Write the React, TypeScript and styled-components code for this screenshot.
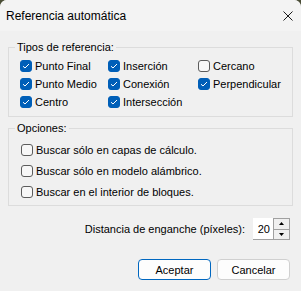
import styled, { createGlobalStyle } from "styled-components";

const GlobalStyle = createGlobalStyle`
  html, body {
    margin: 0;
    background: #4a4d36;
  }
  body {
    font-family: "Liberation Sans", Arial, sans-serif;
    color: #000;
  }
`;

const TYPES = [
  { label: "Punto Final", checked: true },
  { label: "Inserción", checked: true },
  { label: "Cercano", checked: false },
  { label: "Punto Medio", checked: true },
  { label: "Conexión", checked: true },
  { label: "Perpendicular", checked: true },
  { label: "Centro", checked: true },
  { label: "Intersección", checked: true },
];

const OPTIONS = [
  "Buscar sólo en capas de cálculo.",
  "Buscar sólo en modelo alámbrico.",
  "Buscar en el interior de bloques.",
];

const Window = styled.div`
  width: 301px;
  height: 291px;
  background: #f0f0f0;
  border-radius: 7px 7px 0 0;
  overflow: hidden;
  display: flex;
  flex-direction: column;
`;

const TitleBar = styled.div`
  height: 31px;
  background: #f3f3f3;
  display: flex;
  align-items: center;
  justify-content: space-between;
  padding: 0 8px 0 6px;
`;

const Title = styled.span`
  font-size: 12px;
`;

const Body = styled.div`
  display: flex;
  flex-direction: column;
  padding: 8px 8px 0 8px;
`;

const Group = styled.fieldset<{ $top?: number; $bottom: number }>`
  margin: ${(p) => p.$top ?? 0}px 0 0 0;
  padding: 0 0 ${(p) => p.$bottom}px 0;
  border: 1px solid #dcdcdc;
  min-width: 0;
`;

const Legend = styled.legend`
  margin-left: 6px;
  padding: 0 2px;
  font-size: 11px;
  line-height: 16px;
`;

const TypeGrid = styled.div`
  display: grid;
  grid-template-columns: 88px 90px 1fr;
  grid-auto-rows: 18px;
  padding: 2px 0 0 11px;
`;

const OptionList = styled.div`
  display: flex;
  flex-direction: column;
  padding: 3px 0 0 12px;
`;

const CheckRow = styled.label<{ $h: number }>`
  height: ${(p) => p.$h}px;
  display: flex;
  align-items: center;
  gap: 3px;
  font-size: 11px;
  white-space: nowrap;
`;

const Box = styled.span<{ $on: boolean }>`
  width: 12px;
  height: 12px;
  box-sizing: border-box;
  border-radius: 3px;
  display: flex;
  align-items: center;
  justify-content: center;
  background: ${(p) => (p.$on ? "#005fb8" : "#f7f7f7")};
  border: 1px solid ${(p) => (p.$on ? "#005fb8" : "#5c5c5c")};
`;

const SnapRow = styled.div`
  margin: 12px 3px 0 0;
  height: 22px;
  display: flex;
  align-items: center;
  justify-content: flex-end;
  gap: 8px;
  font-size: 11px;
`;

const Spin = styled.div`
  display: flex;
  height: 22px;
`;

const SpinField = styled.div`
  width: 20px;
  background: #fff;
  border-bottom: 1px solid #a0a0a0;
  box-sizing: border-box;
  display: flex;
  align-items: center;
  justify-content: flex-end;
  padding-right: 3px;
  font-size: 11px;
`;

const SpinButtons = styled.div`
  width: 17px;
  display: flex;
  flex-direction: column;
  border: 1px solid #a0a0a0;
  box-sizing: border-box;
  background: #f0f0f0;
`;

const SpinButton = styled.div<{ $down?: boolean }>`
  flex: 1;
  display: flex;
  align-items: center;
  justify-content: center;
  border-top: ${(p) => (p.$down ? "1px solid #a0a0a0" : "none")};
`;

const ButtonRow = styled.div`
  margin: 19px 3px 0 0;
  display: flex;
  justify-content: flex-end;
  gap: 6px;
`;

const Button = styled.button<{ $primary?: boolean }>`
  width: 73px;
  height: 21px;
  box-sizing: border-box;
  border-radius: 4px;
  background: #fdfdfd;
  border: 1px solid ${(p) => (p.$primary ? "#0067c0" : "#d0d0d0")};
  font-family: inherit;
  font-size: 11px;
  color: #000;
  padding: 0;
`;

function Check({ on }: { on: boolean }) {
  return (
    <Box $on={on}>
      {on && (
        <svg width="8" height="6" viewBox="0 0 8 6">
          <path d="M1 3.2 L3 5 L7 1" fill="none" stroke="#fff" strokeWidth="1" />
        </svg>
      )}
    </Box>
  );
}

export default function App() {
  return (
    <>
      <GlobalStyle />
      <Window>
        <TitleBar>
          <Title>Referencia automática</Title>
          <svg width="10" height="10" viewBox="0 0 10 10">
            <path d="M0.5 0.5 L9.5 9.5 M9.5 0.5 L0.5 9.5" stroke="#1a1a1a" strokeWidth="1" />
          </svg>
        </TitleBar>
        <Body>
          <Group $bottom={5}>
            <Legend>Tipos de referencia:</Legend>
            <TypeGrid>
              {TYPES.map((t) => (
                <CheckRow key={t.label} $h={18}>
                  <Check on={t.checked} />
                  {t.label}
                </CheckRow>
              ))}
            </TypeGrid>
          </Group>
          <Group $top={3} $bottom={3}>
            <Legend>Opciones:</Legend>
            <OptionList>
              {OPTIONS.map((o) => (
                <CheckRow key={o} $h={21}>
                  <Check on={false} />
                  {o}
                </CheckRow>
              ))}
            </OptionList>
          </Group>
          <SnapRow>
            Distancia de enganche (píxeles):
            <Spin>
              <SpinField>20</SpinField>
              <SpinButtons>
                <SpinButton>
                  <svg width="5" height="3" viewBox="0 0 5 3">
                    <path d="M0 3 L2.5 0 L5 3 Z" fill="#000" />
                  </svg>
                </SpinButton>
                <SpinButton $down>
                  <svg width="5" height="3" viewBox="0 0 5 3">
                    <path d="M0 0 L2.5 3 L5 0 Z" fill="#000" />
                  </svg>
                </SpinButton>
              </SpinButtons>
            </Spin>
          </SnapRow>
          <ButtonRow>
            <Button $primary>Aceptar</Button>
            <Button>Cancelar</Button>
          </ButtonRow>
        </Body>
      </Window>
    </>
  );
}
